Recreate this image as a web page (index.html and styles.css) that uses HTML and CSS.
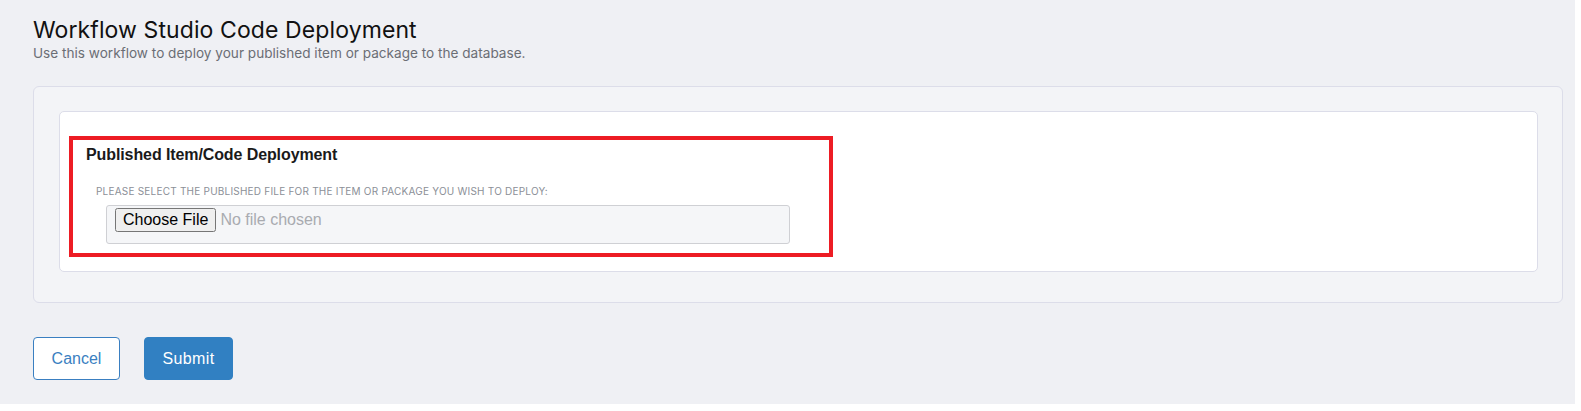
FILE: index.html
```html
<!DOCTYPE html>
<html lang="en">
<head>
<meta charset="utf-8">
<title>Workflow Studio Code Deployment</title>
<link rel="stylesheet" href="styles.css">
</head>
<body>
<div class="page">
  <header class="page-header">
    <h1 class="page-title">Workflow Studio Code Deployment</h1>
    <p class="page-subtitle">Use this workflow to deploy your published item or package to the database.</p>
  </header>
  <section class="panel">
    <div class="card">
      <div class="highlight">
        <h2 class="section-title">Published Item/Code Deployment</h2>
        <label class="field-label" for="file">PLEASE SELECT THE PUBLISHED FILE FOR THE ITEM OR PACKAGE YOU WISH TO DEPLOY:</label>
        <div class="file-box">
          <input class="file-input" id="file" type="file">
        </div>
      </div>
    </div>
  </section>
  <div class="actions">
    <button class="btn btn-outline" type="button">Cancel</button>
    <button class="btn btn-primary" type="button">Submit</button>
  </div>
</div>
</body>
</html>
```
FILE: styles.css
```css
html, body {
  margin: 0;
  padding: 0;
  background: #ffffff;
}

.page {
  box-sizing: border-box;
  width: 1575px;
  height: 404px;
  padding: 15px 12px 0 33px;
  background: #eff0f4;
  font-family: Inter, "Liberation Sans", sans-serif;
}

.page-header {
  display: flex;
  flex-direction: column;
}

.page-title {
  margin: 0;
  font-size: 23px;
  line-height: 30px;
  font-weight: 400;
  color: #111111;
  letter-spacing: 0.1px;
}

.page-subtitle {
  margin: 0;
  font-size: 13.6px;
  line-height: 17px;
  color: #6b6e75;
}

.panel {
  box-sizing: border-box;
  margin-top: 24px;
  height: 217px;
  padding: 24px 24px 29px 25px;
  background: #f3f4f7;
  border: 1px solid #dcdde9;
  border-radius: 6px;
}

.card {
  box-sizing: border-box;
  height: 161px;
  padding: 24px 10px 13px 9px;
  background: #ffffff;
  border: 1px solid #dcdde9;
  border-radius: 5px;
}

.highlight {
  box-sizing: border-box;
  width: 764px;
  height: 121px;
  border: 4px solid #ed1c24;
  padding: 5px 13px 0 13px;
  display: flex;
  flex-direction: column;
}

.section-title {
  margin: 0;
  font-family: "Liberation Sans", Arial, sans-serif;
  font-size: 16px;
  line-height: 20px;
  font-weight: 700;
  color: #1a1a1a;
  letter-spacing: -0.1px;
}

.field-label {
  margin: 20px 0 0 10px;
  font-size: 10px;
  line-height: 12px;
  color: #8b8f97;
  letter-spacing: 0.22px;
}

.file-box {
  box-sizing: border-box;
  margin: 8px 0 0 20px;
  width: 684px;
  height: 39px;
  padding: 2px 8px;
  background: #f5f6f8;
  border: 1px solid #cfd0d4;
  border-radius: 3px;
}

.file-input {
  font-family: "Liberation Sans", Arial, sans-serif;
  font-size: 16px;
  color: #a9abb0;
}

.actions {
  display: flex;
  gap: 24px;
  margin-top: 34px;
}

.btn {
  box-sizing: border-box;
  height: 43px;
  padding: 0;
  border-radius: 4px;
  font-family: "Liberation Sans", Arial, sans-serif;
  font-size: 16px;
  cursor: pointer;
}

.btn-outline {
  width: 87px;
  background: #ffffff;
  border: 1px solid #3a7fc1;
  color: #3a7fc1;
}

.btn-primary {
  width: 89px;
  background: #3180c2;
  border: 1px solid #3180c2;
  color: #ffffff;
  letter-spacing: 0.4px;
}
```
